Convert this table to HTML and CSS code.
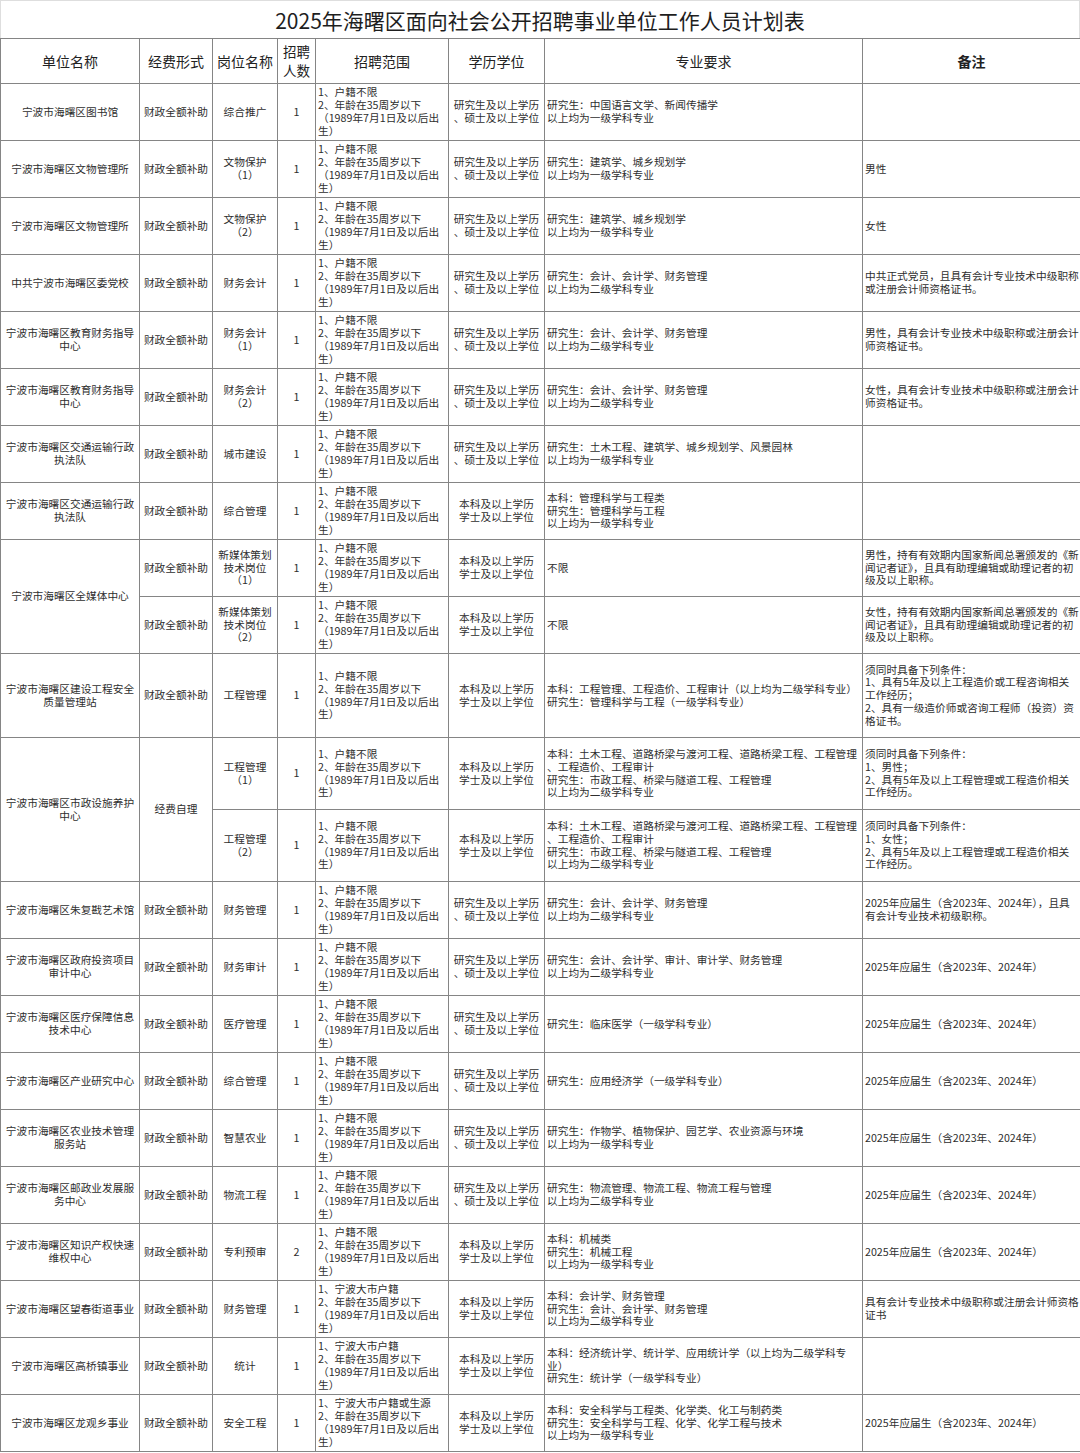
FILE: index.html
```html
<!DOCTYPE html>
<html lang="zh-CN">
<head>
<meta charset="utf-8">
<title>2025年海曙区面向社会公开招聘事业单位工作人员计划表</title>
<link rel="stylesheet" href="styles.css">
</head>
<body>
<div class="sheet">
<div class="title">2025年海曙区面向社会公开招聘事业单位工作人员计划表</div>
<table class="plan">
<colgroup>
<col class="w-unit"><col class="w-fund"><col class="w-post"><col class="w-num"><col class="w-scope"><col class="w-edu"><col class="w-major"><col class="w-note">
</colgroup>
<thead>
<tr class="head">
<th>单位名称</th><th>经费形式</th><th>岗位名称</th><th class="two">招聘<br>人数</th><th>招聘范围</th><th>学历学位</th><th>专业要求</th><th class="bold">备注</th>
</tr>
</thead>
<tbody>
<tr class="r">
<td class="c">宁波市海曙区图书馆</td><td class="c">财政全额补助</td><td class="c">综合推广</td><td class="c">1</td>
<td class="l">1、户籍不限<br>2、年龄在35周岁以下<br>（1989年7月1日及以后出<br>生）</td>
<td class="c">研究生及以上学历<br>、硕士及以上学位</td>
<td class="l">研究生：中国语言文学、新闻传播学<br>以上均为一级学科专业</td>
<td class="l"></td>
</tr>
<tr class="r">
<td class="c">宁波市海曙区文物管理所</td><td class="c">财政全额补助</td><td class="c">文物保护<br>（1）</td><td class="c">1</td>
<td class="l">1、户籍不限<br>2、年龄在35周岁以下<br>（1989年7月1日及以后出<br>生）</td>
<td class="c">研究生及以上学历<br>、硕士及以上学位</td>
<td class="l">研究生：建筑学、城乡规划学<br>以上均为一级学科专业</td>
<td class="l">男性</td>
</tr>
<tr class="r">
<td class="c">宁波市海曙区文物管理所</td><td class="c">财政全额补助</td><td class="c">文物保护<br>（2）</td><td class="c">1</td>
<td class="l">1、户籍不限<br>2、年龄在35周岁以下<br>（1989年7月1日及以后出<br>生）</td>
<td class="c">研究生及以上学历<br>、硕士及以上学位</td>
<td class="l">研究生：建筑学、城乡规划学<br>以上均为一级学科专业</td>
<td class="l">女性</td>
</tr>
<tr class="r">
<td class="c">中共宁波市海曙区委党校</td><td class="c">财政全额补助</td><td class="c">财务会计</td><td class="c">1</td>
<td class="l">1、户籍不限<br>2、年龄在35周岁以下<br>（1989年7月1日及以后出<br>生）</td>
<td class="c">研究生及以上学历<br>、硕士及以上学位</td>
<td class="l">研究生：会计、会计学、财务管理<br>以上均为二级学科专业</td>
<td class="l">中共正式党员，且具有会计专业技术中级职称<br>或注册会计师资格证书。</td>
</tr>
<tr class="r">
<td class="c">宁波市海曙区教育财务指导<br>中心</td><td class="c">财政全额补助</td><td class="c">财务会计<br>（1）</td><td class="c">1</td>
<td class="l">1、户籍不限<br>2、年龄在35周岁以下<br>（1989年7月1日及以后出<br>生）</td>
<td class="c">研究生及以上学历<br>、硕士及以上学位</td>
<td class="l">研究生：会计、会计学、财务管理<br>以上均为二级学科专业</td>
<td class="l">男性，具有会计专业技术中级职称或注册会计<br>师资格证书。</td>
</tr>
<tr class="r">
<td class="c">宁波市海曙区教育财务指导<br>中心</td><td class="c">财政全额补助</td><td class="c">财务会计<br>（2）</td><td class="c">1</td>
<td class="l">1、户籍不限<br>2、年龄在35周岁以下<br>（1989年7月1日及以后出<br>生）</td>
<td class="c">研究生及以上学历<br>、硕士及以上学位</td>
<td class="l">研究生：会计、会计学、财务管理<br>以上均为二级学科专业</td>
<td class="l">女性，具有会计专业技术中级职称或注册会计<br>师资格证书。</td>
</tr>
<tr class="r">
<td class="c">宁波市海曙区交通运输行政<br>执法队</td><td class="c">财政全额补助</td><td class="c">城市建设</td><td class="c">1</td>
<td class="l">1、户籍不限<br>2、年龄在35周岁以下<br>（1989年7月1日及以后出<br>生）</td>
<td class="c">研究生及以上学历<br>、硕士及以上学位</td>
<td class="l">研究生：土木工程、建筑学、城乡规划学、风景园林<br>以上均为一级学科专业</td>
<td class="l"></td>
</tr>
<tr class="r">
<td class="c">宁波市海曙区交通运输行政<br>执法队</td><td class="c">财政全额补助</td><td class="c">综合管理</td><td class="c">1</td>
<td class="l">1、户籍不限<br>2、年龄在35周岁以下<br>（1989年7月1日及以后出<br>生）</td>
<td class="c">本科及以上学历<br>学士及以上学位</td>
<td class="l">本科：管理科学与工程类<br>研究生：管理科学与工程<br>以上均为一级学科专业</td>
<td class="l"></td>
</tr>
<tr class="r">
<td class="c" rowspan="2">宁波市海曙区全媒体中心</td><td class="c">财政全额补助</td><td class="c">新媒体策划<br>技术岗位<br>（1）</td><td class="c">1</td>
<td class="l">1、户籍不限<br>2、年龄在35周岁以下<br>（1989年7月1日及以后出<br>生）</td>
<td class="c">本科及以上学历<br>学士及以上学位</td>
<td class="l">不限</td>
<td class="l">男性，持有有效期内国家新闻总署颁发的《新<br>闻记者证》，且具有助理编辑或助理记者的初<br>级及以上职称。</td>
</tr>
<tr class="r">
<td class="c">财政全额补助</td><td class="c">新媒体策划<br>技术岗位<br>（2）</td><td class="c">1</td>
<td class="l">1、户籍不限<br>2、年龄在35周岁以下<br>（1989年7月1日及以后出<br>生）</td>
<td class="c">本科及以上学历<br>学士及以上学位</td>
<td class="l">不限</td>
<td class="l">女性，持有有效期内国家新闻总署颁发的《新<br>闻记者证》，且具有助理编辑或助理记者的初<br>级及以上职称。</td>
</tr>
<tr class="r84">
<td class="c">宁波市海曙区建设工程安全<br>质量管理站</td><td class="c">财政全额补助</td><td class="c">工程管理</td><td class="c">1</td>
<td class="l">1、户籍不限<br>2、年龄在35周岁以下<br>（1989年7月1日及以后出<br>生）</td>
<td class="c">本科及以上学历<br>学士及以上学位</td>
<td class="l">本科：工程管理、工程造价、工程审计（以上均为二级学科专业）<br>研究生：管理科学与工程（一级学科专业）</td>
<td class="l">须同时具备下列条件：<br>1、具有5年及以上工程造价或工程咨询相关<br>工作经历；<br>2、具有一级造价师或咨询工程师（投资）资<br>格证书。</td>
</tr>
<tr class="r72">
<td class="c" rowspan="2">宁波市海曙区市政设施养护<br>中心</td><td class="c" rowspan="2">经费自理</td><td class="c">工程管理<br>（1）</td><td class="c">1</td>
<td class="l">1、户籍不限<br>2、年龄在35周岁以下<br>（1989年7月1日及以后出<br>生）</td>
<td class="c">本科及以上学历<br>学士及以上学位</td>
<td class="l">本科：土木工程、道路桥梁与渡河工程、道路桥梁工程、工程管理<br>、工程造价、工程审计<br>研究生：市政工程、桥梁与隧道工程、工程管理<br>以上均为二级学科专业</td>
<td class="l">须同时具备下列条件：<br>1、男性；<br>2、具有5年及以上工程管理或工程造价相关<br>工作经历。</td>
</tr>
<tr class="r72">
<td class="c">工程管理<br>（2）</td><td class="c">1</td>
<td class="l">1、户籍不限<br>2、年龄在35周岁以下<br>（1989年7月1日及以后出<br>生）</td>
<td class="c">本科及以上学历<br>学士及以上学位</td>
<td class="l">本科：土木工程、道路桥梁与渡河工程、道路桥梁工程、工程管理<br>、工程造价、工程审计<br>研究生：市政工程、桥梁与隧道工程、工程管理<br>以上均为二级学科专业</td>
<td class="l">须同时具备下列条件：<br>1、女性；<br>2、具有5年及以上工程管理或工程造价相关<br>工作经历。</td>
</tr>
<tr class="r">
<td class="c">宁波市海曙区朱复戡艺术馆</td><td class="c">财政全额补助</td><td class="c">财务管理</td><td class="c">1</td>
<td class="l">1、户籍不限<br>2、年龄在35周岁以下<br>（1989年7月1日及以后出<br>生）</td>
<td class="c">研究生及以上学历<br>、硕士及以上学位</td>
<td class="l">研究生：会计、会计学、财务管理<br>以上均为二级学科专业</td>
<td class="l">2025年应届生（含2023年、2024年），且具<br>有会计专业技术初级职称。</td>
</tr>
<tr class="r">
<td class="c">宁波市海曙区政府投资项目<br>审计中心</td><td class="c">财政全额补助</td><td class="c">财务审计</td><td class="c">1</td>
<td class="l">1、户籍不限<br>2、年龄在35周岁以下<br>（1989年7月1日及以后出<br>生）</td>
<td class="c">研究生及以上学历<br>、硕士及以上学位</td>
<td class="l">研究生：会计、会计学、审计、审计学、财务管理<br>以上均为二级学科专业</td>
<td class="l">2025年应届生（含2023年、2024年）</td>
</tr>
<tr class="r">
<td class="c">宁波市海曙区医疗保障信息<br>技术中心</td><td class="c">财政全额补助</td><td class="c">医疗管理</td><td class="c">1</td>
<td class="l">1、户籍不限<br>2、年龄在35周岁以下<br>（1989年7月1日及以后出<br>生）</td>
<td class="c">研究生及以上学历<br>、硕士及以上学位</td>
<td class="l">研究生：临床医学（一级学科专业）</td>
<td class="l">2025年应届生（含2023年、2024年）</td>
</tr>
<tr class="r">
<td class="c">宁波市海曙区产业研究中心</td><td class="c">财政全额补助</td><td class="c">综合管理</td><td class="c">1</td>
<td class="l">1、户籍不限<br>2、年龄在35周岁以下<br>（1989年7月1日及以后出<br>生）</td>
<td class="c">研究生及以上学历<br>、硕士及以上学位</td>
<td class="l">研究生：应用经济学（一级学科专业）</td>
<td class="l">2025年应届生（含2023年、2024年）</td>
</tr>
<tr class="r">
<td class="c">宁波市海曙区农业技术管理<br>服务站</td><td class="c">财政全额补助</td><td class="c">智慧农业</td><td class="c">1</td>
<td class="l">1、户籍不限<br>2、年龄在35周岁以下<br>（1989年7月1日及以后出<br>生）</td>
<td class="c">研究生及以上学历<br>、硕士及以上学位</td>
<td class="l">研究生：作物学、植物保护、园艺学、农业资源与环境<br>以上均为一级学科专业</td>
<td class="l">2025年应届生（含2023年、2024年）</td>
</tr>
<tr class="r">
<td class="c">宁波市海曙区邮政业发展服<br>务中心</td><td class="c">财政全额补助</td><td class="c">物流工程</td><td class="c">1</td>
<td class="l">1、户籍不限<br>2、年龄在35周岁以下<br>（1989年7月1日及以后出<br>生）</td>
<td class="c">研究生及以上学历<br>、硕士及以上学位</td>
<td class="l">研究生：物流管理、物流工程、物流工程与管理<br>以上均为二级学科专业</td>
<td class="l">2025年应届生（含2023年、2024年）</td>
</tr>
<tr class="r">
<td class="c">宁波市海曙区知识产权快速<br>维权中心</td><td class="c">财政全额补助</td><td class="c">专利预审</td><td class="c">2</td>
<td class="l">1、户籍不限<br>2、年龄在35周岁以下<br>（1989年7月1日及以后出<br>生）</td>
<td class="c">本科及以上学历<br>学士及以上学位</td>
<td class="l">本科：机械类<br>研究生：机械工程<br>以上均为一级学科专业</td>
<td class="l">2025年应届生（含2023年、2024年）</td>
</tr>
<tr class="r">
<td class="c">宁波市海曙区望春街道事业</td><td class="c">财政全额补助</td><td class="c">财务管理</td><td class="c">1</td>
<td class="l">1、宁波大市户籍<br>2、年龄在35周岁以下<br>（1989年7月1日及以后出<br>生）</td>
<td class="c">本科及以上学历<br>学士及以上学位</td>
<td class="l">本科：会计学、财务管理<br>研究生：会计、会计学、财务管理<br>以上均为二级学科专业</td>
<td class="l">具有会计专业技术中级职称或注册会计师资格<br>证书</td>
</tr>
<tr class="r">
<td class="c">宁波市海曙区高桥镇事业</td><td class="c">财政全额补助</td><td class="c">统计</td><td class="c">1</td>
<td class="l">1、宁波大市户籍<br>2、年龄在35周岁以下<br>（1989年7月1日及以后出<br>生）</td>
<td class="c">本科及以上学历<br>学士及以上学位</td>
<td class="l">本科：经济统计学、统计学、应用统计学（以上均为二级学科专<br>业）<br>研究生：统计学（一级学科专业）</td>
<td class="l"></td>
</tr>
<tr class="r">
<td class="c">宁波市海曙区龙观乡事业</td><td class="c">财政全额补助</td><td class="c">安全工程</td><td class="c">1</td>
<td class="l">1、宁波大市户籍或生源<br>2、年龄在35周岁以下<br>（1989年7月1日及以后出<br>生）</td>
<td class="c">本科及以上学历<br>学士及以上学位</td>
<td class="l">本科：安全科学与工程类、化学类、化工与制药类<br>研究生：安全科学与工程、化学、化学工程与技术<br>以上均为一级学科专业</td>
<td class="l">2025年应届生（含2023年、2024年）</td>
</tr>
</tbody>
</table>
</div>
</body>
</html>
```

FILE: styles.css
```css
html, body {
  margin: 0;
  padding: 0;
  background: #ffffff;
}

body {
  font-family: "Noto Sans CJK SC", "Noto Sans", sans-serif;
  color: #2e2e2e;
}

.sheet {
  width: 1080px;
}

.title {
  box-sizing: border-box;
  height: 38px;
  border: 1px solid #dedede;
  border-bottom: 0;
  text-align: center;
  font-size: 21px;
  line-height: 38px;
  color: #1e1e1e;
}

.plan {
  width: 1080px;
  border-collapse: collapse;
  table-layout: fixed;
}

.w-unit { width: 139px; }
.w-fund { width: 73px; }
.w-post { width: 65px; }
.w-num { width: 38px; }
.w-scope { width: 133px; }
.w-edu { width: 96px; }
.w-major { width: 318px; }
.w-note { width: 218px; }

.plan th,
.plan td {
  border: 1px solid #858585;
  padding: 0 0 0 2px;
  vertical-align: middle;
  font-weight: 400;
}

.plan th {
  font-size: 14px;
  line-height: 17px;
  text-align: center;
  color: #222222;
  padding: 0;
}

.plan th.two {
  font-size: 13.5px;
  line-height: 19px;
}

.plan th.bold {
  font-weight: 700;
}

.plan td {
  font-size: 10.7px;
  line-height: 12.8px;
  white-space: nowrap;
}

.plan td.c {
  text-align: center;
  padding: 0;
}

.plan td.l {
  text-align: left;
}

.head { height: 45px; }
.r { height: 57px; }
.r84 { height: 84px; }
.r72 { height: 72px; }
```
